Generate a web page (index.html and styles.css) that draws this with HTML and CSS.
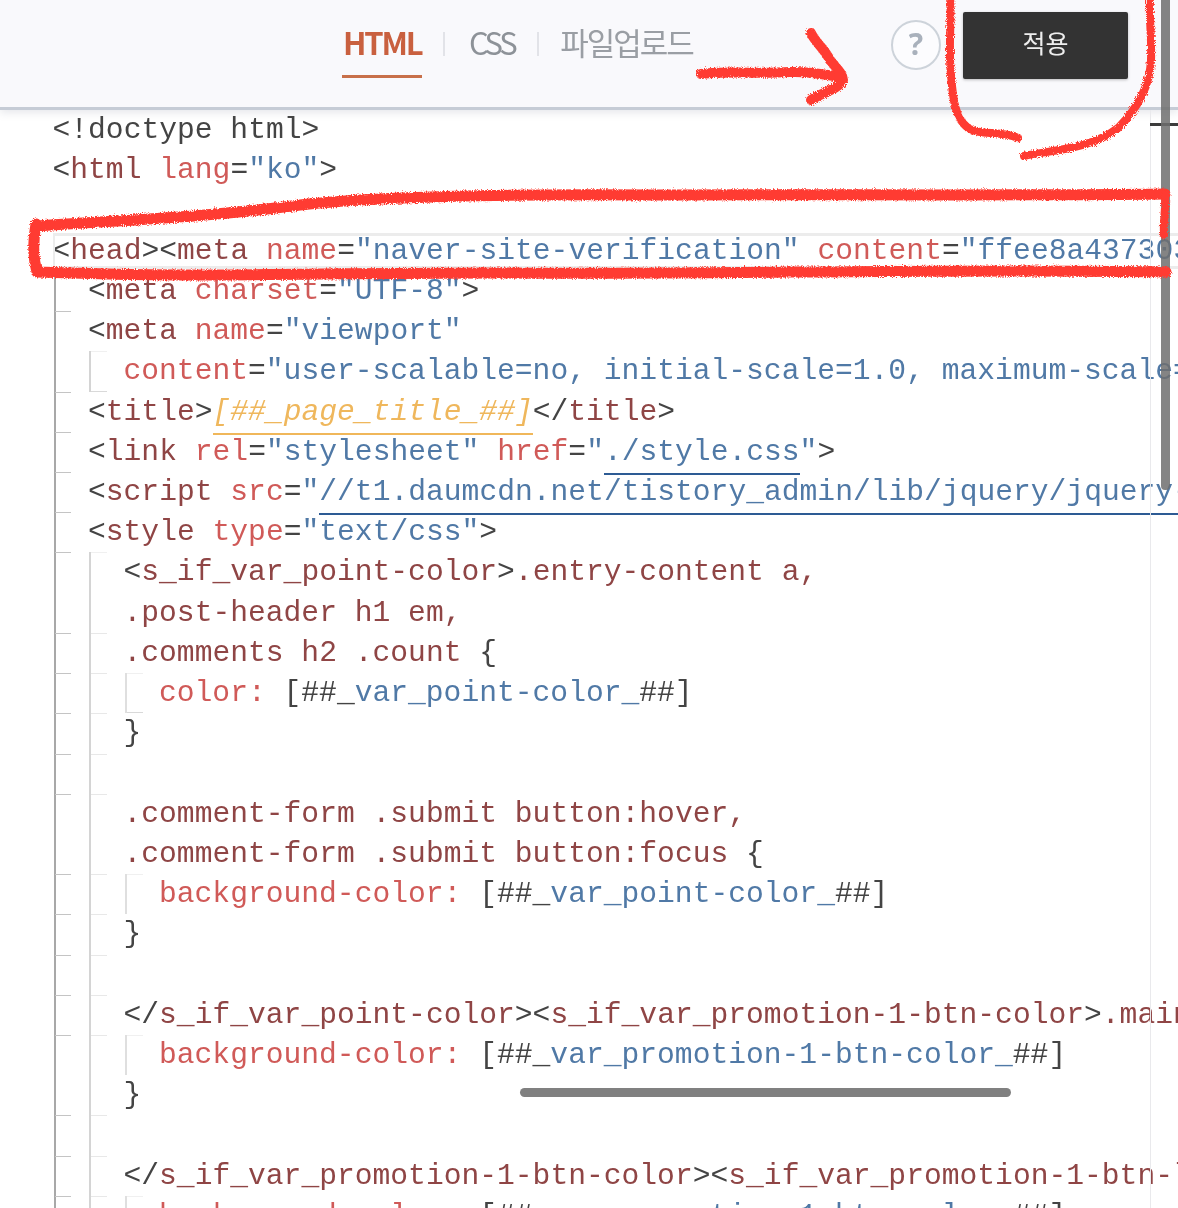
FILE: index.html
```html
<!DOCTYPE html>
<html lang="ko">
<head>
<meta charset="utf-8">
<title>HTML 편집</title>
<link rel="stylesheet" href="styles.css">
</head>
<body>
<div class="page">
  <header class="topbar">
    <nav class="tabs">
      <a class="tab tab-active">HTML</a>
      <span class="sep"></span>
      <a class="tab tab-css">CSS</a>
      <span class="sep sep-b"></span>
      <a class="tab tab-up">파일업로드</a>
    </nav>
    <div class="actions">
      <span class="help">?</span>
      <button class="apply">적용</button>
    </div>
  </header>
  <main class="code">
<div class="row"><span class="b">&lt;!doctype html&gt;</span></div>
<div class="row"><span class="b">&lt;</span><span class="t">html</span> <span class="a">lang</span><span class="b">=</span><span class="s">"ko"</span><span class="b">&gt;</span></div>
<div class="row"> </div>
<div class="row active"><span class="b">&lt;</span><span class="t">head</span><span class="b">&gt;&lt;</span><span class="t">meta</span> <span class="a">name</span><span class="b">=</span><span class="s">"naver-site-verification"</span> <span class="a">content</span><span class="b">=</span><span class="s">"ffee8a437303c9d1"</span></div>
<div class="fold f1">
<div class="row"><span class="b">&lt;</span><span class="t">meta</span> <span class="a">charset</span><span class="b">=</span><span class="s">"UTF-8"</span><span class="b">&gt;</span></div>
<div class="row ta"><span class="b">&lt;</span><span class="t">meta</span> <span class="a">name</span><span class="b">=</span><span class="s">"viewport"</span></div>
<div class="fold f2 tip-end">
<div class="row"><span class="a">content</span><span class="b">=</span><span class="s">"user-scalable=no, initial-scale=1.0, maximum-scale=1.0"</span></div>
</div>
<div class="row ta"><span class="b">&lt;</span><span class="t">title</span><span class="b">&gt;</span><span class="o"><span class="ul-o">[##_page_title_##]</span></span><span class="b">&lt;/</span><span class="t">title</span><span class="b">&gt;</span></div>
<div class="row ta"><span class="b">&lt;</span><span class="t">link</span> <span class="a">rel</span><span class="b">=</span><span class="s">"stylesheet"</span> <span class="a">href</span><span class="b">=</span><span class="s">"<span class="ul-b">./style.css</span>"</span><span class="b">&gt;</span></div>
<div class="row ta"><span class="b">&lt;</span><span class="t">script</span> <span class="a">src</span><span class="b">=</span><span class="s">"<span class="ul-b">//t1.daumcdn.net/tistory_admin/lib/jquery/jquery-1.12.4.min.js</span>"</span></div>
<div class="row ta"><span class="b">&lt;</span><span class="t">style</span> <span class="a">type</span><span class="b">=</span><span class="s">"text/css"</span><span class="b">&gt;</span></div>
<div class="fold f2">
<div class="row ta"><span class="b">&lt;</span><span class="t">s_if_var_point-color</span><span class="b">&gt;</span><span class="t">.entry-content a,</span></div>
<div class="row"><span class="t">.post-header h1 em,</span></div>
<div class="row ta tb"><span class="t">.comments h2 .count</span> <span class="b">{</span></div>
<div class="fold f3 tip-end">
<div class="row ta tb"><span class="a">color:</span> <span class="b">[##_</span><span class="s">var_point-color_</span><span class="b">##]</span></div>
</div>
<div class="row ta tb"><span class="b">}</span></div>
<div class="row ta tb"> </div>
<div class="row ta tb"><span class="t">.comment-form .submit button:hover,</span></div>
<div class="row"><span class="t">.comment-form .submit button:focus</span> <span class="b">{</span></div>
<div class="fold f3">
<div class="row ta tb"><span class="a">background-color:</span> <span class="b">[##_</span><span class="s">var_point-color_</span><span class="b">##]</span></div>
</div>
<div class="row ta tb"><span class="b">}</span></div>
<div class="row ta tb"> </div>
<div class="row ta tb"><span class="b">&lt;/</span><span class="t">s_if_var_point-color</span><span class="b">&gt;&lt;</span><span class="t">s_if_var_promotion-1-btn-color</span><span class="b">&gt;</span><span class="t">.main-cover .btn</span></div>
<div class="fold f3">
<div class="row ta tb"><span class="a">background-color:</span> <span class="b">[##_</span><span class="s">var_promotion-1-btn-color_</span><span class="b">##]</span></div>
</div>
<div class="row"><span class="b">}</span></div>
<div class="row ta tb"> </div>
<div class="row ta tb"><span class="b">&lt;/</span><span class="t">s_if_var_promotion-1-btn-color</span><span class="b">&gt;&lt;</span><span class="t">s_if_var_promotion-1-btn-label</span><span class="b">&gt;</span></div>
<div class="fold f3">
<div class="row ta tb"><span class="a">background-color:</span> <span class="b">[##_</span><span class="s">var_promotion-1-btn-color_</span><span class="b">##]</span></div>
</div>
</div>
</div>
  </main>
  <div class="margin-line"></div>
  <div class="margin-tick"></div>
  <div class="vbar"></div>
  <div class="hbar"></div>
  <svg class="ink" width="1178" height="1208" viewBox="0 0 1178 1208" aria-hidden="true">
    <defs>
      <filter id="rough" x="-5%" y="-5%" width="110%" height="110%">
        <feTurbulence type="fractalNoise" baseFrequency="0.9" numOctaves="2" seed="4"/>
        <feDisplacementMap in="SourceGraphic" scale="5"/>
      </filter>
    </defs>
    <g class="ink-strokes" filter="url(#rough)">
      <path class="w10" d="M701 74C730 71 760 74 790 72C810 71 825 75 842 77"/>
      <path class="w10" d="M811 33C815 42 824 48 830 60C836 68 842 72 843 80C838 90 822 92 811 100"/>
      <path class="w8" d="M950 -4C952 20 948 45 951 75C953 100 955 118 968 128C980 136 1000 130 1018 138"/>
      <path class="w8" d="M1024 156C1050 150 1090 150 1118 128C1138 108 1150 85 1151 60C1152 40 1149 20 1150 -4"/>
      <path class="w12" d="M38 226C120 220 200 218 300 205C380 196 500 194 650 195C800 194 1000 196 1165 194"/>
      <path class="w8" d="M1165 194C1166 210 1163 220 1164 235"/>
      <path class="w12" d="M36 224C33 240 33 258 37 272C200 278 300 273 500 273C700 275 950 268 1166 272"/>
    </g>
  </svg>
</div>
</body>
</html>
```
FILE: styles.css
```css
* { box-sizing: border-box; }
html, body { margin: 0; padding: 0; background: #fff; }
.page {
  position: relative;
  width: 1178px;
  height: 1208px;
  overflow: hidden;
  background: #fff;
}
.topbar {
  display: flex;
  align-items: flex-start;
  height: 110px;
  padding: 0 50px 0 342px;
  background: #f9f9fc;
  border-bottom: 3px solid #c6ccd6;
  box-shadow: 0 3px 8px rgba(120, 130, 150, .18);
  position: relative;
  font-family: "Noto Sans CJK KR", "Noto Sans", sans-serif;
  filter: blur(.4px);
}
.tabs { display: flex; align-items: flex-start; padding-top: 20px; }
.tab {
  display: block;
  height: 58px;
  font-size: 31px;
  line-height: 44px;
  color: #8d9298;
  letter-spacing: -1.6px;
}
.tab-active {
  width: 80px;
  padding-left: 1px;
  font-weight: 700;
  letter-spacing: -2.2px;
  color: #c9603f;
  border-bottom: 3px solid #c8704a;
}
.tab-css { letter-spacing: -3.4px; }
.tab-up { color: #9a9ea4; letter-spacing: -2px; }
.sep {
  width: 2px;
  height: 24px;
  margin: 12px 24px 0 21px;
  background: #e2e3e8;
}
.sep-b { margin: 12px 21px 0 23px; }
.actions { display: flex; align-items: flex-start; gap: 22px; margin-left: auto; padding-top: 12px; }
.help {
  width: 50px;
  height: 50px;
  margin-top: 8px;
  border: 2px solid #cdd3da;
  border-radius: 50%;
  background: #fcfcfe;
  color: #a9b1bc;
  font: 700 30px/44px "Noto Sans", sans-serif;
  text-align: center;
}
.apply {
  width: 165px;
  height: 67px;
  padding: 0 0 8px;
  border: 0;
  border-radius: 2px;
  background: #333;
  box-shadow: 0 1px 3px rgba(0, 0, 0, .25);
  color: #eee;
  font: 400 25px "Noto Sans CJK KR", sans-serif;
}
.code {
  padding: 0 0 0 52.5px;
  font: 29.65px/40.23px "Liberation Mono", monospace;
  filter: blur(.5px);
  --d: 0;
}
.row { position: relative; height: 40.23px; white-space: pre; }
.active::before {
  content: "";
  position: absolute;
  left: 0;
  top: 2px;
  width: 1126px;
  bottom: 2px;
  border: solid #ececec;
  border-width: 3px 0 3px 2px;
}
.fold { position: relative; margin-left: 1px; padding-left: 32.5px; border-left: 2px solid #bbb; }
.f1 { --d: 1; border-color: #a8a8a8; }
.f2 { --d: 2; border-color: #d4d4d4; }
.f3 { --d: 3; border-color: #dfdfdf; }
.fold.f2::before, .fold.f3::before {
  content: "";
  position: absolute;
  left: 0;
  top: 0;
  width: 16px;
  height: 1px;
  background: #f0f0f0;
}
.tip-end::after {
  content: "";
  position: absolute;
  left: 0;
  bottom: 0;
  width: 16px;
  height: 1px;
  background: #d9d9d9;
}
.ta::before, .tb::after {
  content: "";
  position: absolute;
  top: 0;
  width: 16px;
  height: 1px;
}
.ta::before { left: calc(-35.5px * var(--d) + 2.5px); background: #c4c4c4; }
.tb::after { left: calc(-35.5px * (var(--d) - 1) + 2.5px); background: #e8e8e8; }
.b { color: #444; }
.t { color: #8f4545; }
.a { color: #d05a58; }
.s { color: #5079a6; }
.o { color: #efb75c; font-style: italic; }
.ul-o { display: inline-block; height: 43px; border-bottom: 2px solid #f0b75a; }
.ul-b { display: inline-block; height: 43px; border-bottom: 2px solid #2d5b94; }
.margin-line { position: absolute; left: 1150px; top: 110px; bottom: 0; width: 1px; background: #e9e9ec; }
.margin-tick { position: absolute; left: 1150px; top: 123px; width: 28px; height: 3px; background: #3c3c3c; }
.vbar { position: absolute; left: 1161px; top: 0; width: 9px; height: 490px; background: rgba(110, 110, 110, .85); border-radius: 0 0 4px 4px; }
.hbar { position: absolute; left: 520px; top: 1088px; width: 491px; height: 9px; background: #808080; border-radius: 5px; }
.ink { position: absolute; left: 0; top: 0; pointer-events: none; }
.ink-strokes path { fill: none; stroke: #ff3b30; stroke-linecap: round; stroke-linejoin: round; }
.w8 { stroke-width: 8px; }
.w10 { stroke-width: 10px; }
.w12 { stroke-width: 11px; }
```
